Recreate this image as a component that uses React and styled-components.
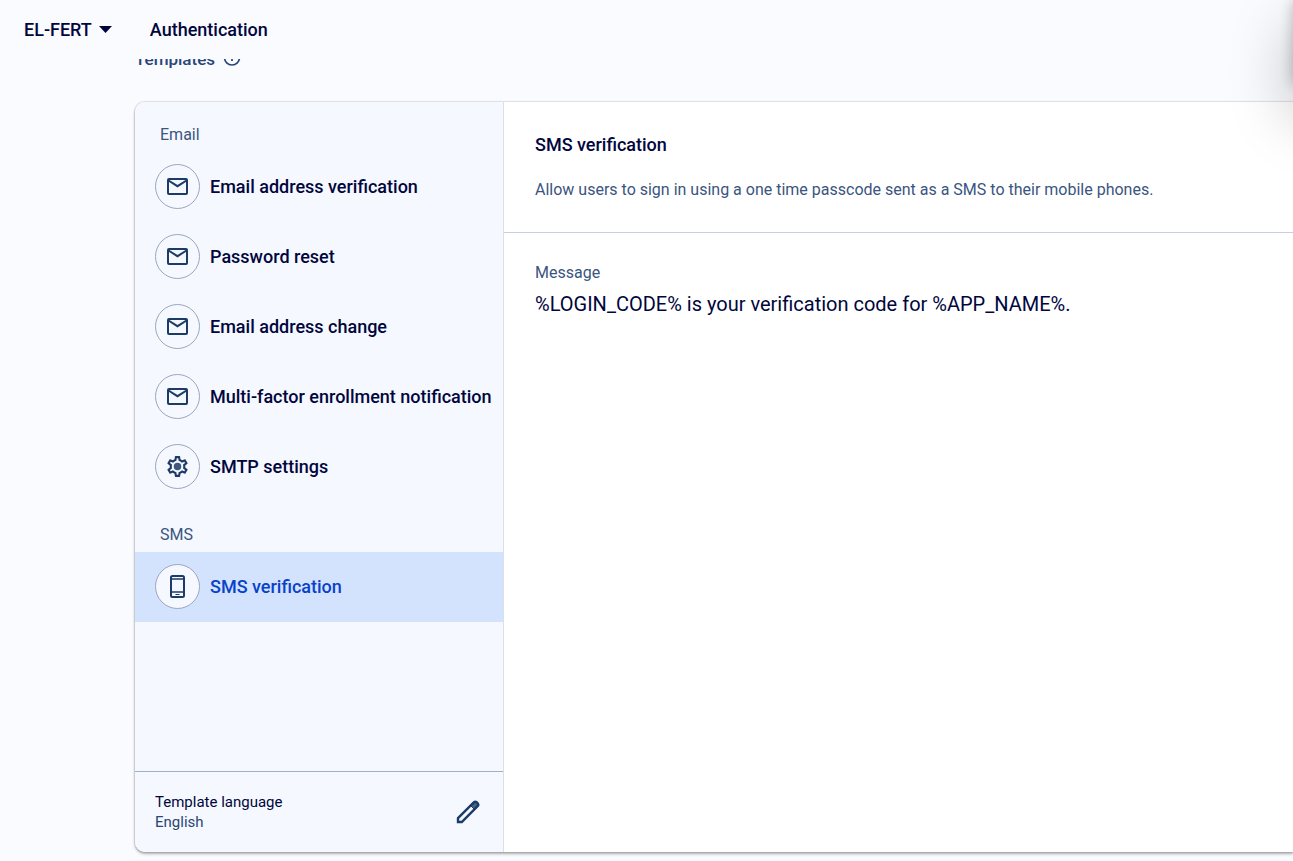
import React from "react";
import styled, { createGlobalStyle } from "styled-components";

const GlobalStyle = createGlobalStyle`
  *, *::before, *::after { box-sizing: border-box; }
  body {
    margin: 0;
    background: #fafbff;
    color: #00063d;
    font-family: Roboto, "Liberation Sans", sans-serif;
  }
  h1, h2, h3, p, ul, dl, dd { margin: 0; padding: 0; }
  button { font: inherit; color: inherit; background: none; border: 0; padding: 0; cursor: pointer; }
`;

const Page = styled.div`
  min-height: 100vh;
  display: flex;
  flex-direction: column;
  overflow: hidden;
`;

const Header = styled.header`
  height: 59px;
  flex: none;
  display: flex;
  align-items: center;
  gap: 38px;
  padding: 0 24px;
`;

const ProjectButton = styled.button`
  display: flex;
  align-items: center;
  gap: 7px;
  font-size: 18px;
  line-height: 24px;
  font-weight: 500;
`;

const HeaderTitle = styled.h1`
  font-size: 18px;
  line-height: 24px;
  font-weight: 500;
`;

const ScrollArea = styled.main`
  flex: 1;
  display: flex;
  flex-direction: column;
  overflow: hidden;
  padding: 0 0 9px 135px;
`;

const Tab = styled.nav`
  display: flex;
  align-items: center;
  gap: 8px;
  margin-top: -10px;
  margin-bottom: 33px;
  color: #294677;
`;

const TabLink = styled.a`
  color: inherit;
  text-decoration: none;
  font-size: 17px;
  line-height: 20px;
  font-weight: 500;
`;

const Card = styled.div`
  flex: 1;
  display: flex;
  background: #fff;
  border-radius: 10px 0 0 10px;
  box-shadow: 0 0 1px 1px rgba(60, 64, 80, 0.14), 0 2px 3px rgba(0, 0, 0, 0.3);
`;

const Sidebar = styled.aside`
  flex: 0 0 369px;
  min-width: 0;
  display: flex;
  flex-direction: column;
  background: #f5f8fe;
  border-right: 1px solid #d9dfeb;
  border-radius: 10px 0 0 10px;
`;

const GroupLabel = styled.h3`
  padding: 23px 25px 7px;
  font-size: 16px;
  line-height: 20px;
  font-weight: 400;
  color: #3a5580;
`;

const List = styled.ul`
  list-style: none;
`;

const Row = styled.button`
  width: 100%;
  height: 70px;
  display: flex;
  align-items: center;
  gap: 10px;
  padding: 0 8px 1px 20px;
  text-align: left;
  white-space: nowrap;
  font-size: 18px;
  line-height: 25px;
  font-weight: 500;
  color: ${(p) => (p.$active ? "#0842c8" : "#00063d")};
  background: ${(p) => (p.$active ? "#d3e3fd" : "transparent")};
`;

const IconCircle = styled.span`
  flex: none;
  width: 45px;
  height: 45px;
  display: grid;
  place-items: center;
  border: 1px solid #9aa7c0;
  border-radius: 50%;
  background: #f5f8fe;
  color: #1c3b66;
`;

const LanguageBar = styled.footer`
  margin-top: auto;
  height: 81px;
  display: flex;
  align-items: center;
  justify-content: space-between;
  padding: 0 23px 0 20px;
  border-top: 1px solid #9fb0c9;
`;

const LanguageText = styled.dl`
  font-size: 15px;
  line-height: 20px;
`;

const LanguageValue = styled.dd`
  color: #294677;
`;

const EditButton = styled.button`
  display: grid;
  color: #1c3b66;
`;

const Detail = styled.section`
  flex: 1;
  min-width: 0;
`;

const DetailHead = styled.div`
  padding: 31px 31px 32px;
  border-bottom: 1px solid #c9d0dd;
`;

const DetailTitle = styled.h2`
  font-size: 18px;
  line-height: 24px;
  font-weight: 500;
`;

const Description = styled.p`
  margin-top: 23px;
  font-size: 16px;
  line-height: 20px;
  color: #3a5580;
`;

const Message = styled.dl`
  padding: 30px 31px;
`;

const MessageLabel = styled.dt`
  font-size: 16px;
  line-height: 20px;
  color: #3a5580;
`;

const MessageText = styled.dd`
  margin-top: 7px;
  font-size: 20px;
  line-height: 28px;
`;

const FloatingPanel = styled.div`
  position: fixed;
  top: 0;
  left: 100%;
  width: 400px;
  height: 84px;
  box-shadow: 0 0 14px rgba(0, 0, 0, 0.24), 0 30px 60px 4px rgba(0, 0, 0, 0.22);
  pointer-events: none;
`;

const MailIcon = () => (
  <svg width="21" height="17" viewBox="0 0 21 17" fill="none" stroke="currentColor" strokeWidth="2" aria-hidden="true">
    <rect x="1" y="1" width="19" height="15" rx="1" />
    <path d="M1.5 2.5 10.5 8.2 19.5 2.5" />
  </svg>
);

const GearIcon = () => (
  <svg width="25" height="25" viewBox="0 0 24 24" fill="currentColor" aria-hidden="true">
    <path d="M19.43 12.98c.04-.32.07-.64.07-.98s-.03-.66-.07-.98l2.11-1.65c.19-.15.24-.42.12-.64l-2-3.46c-.09-.16-.26-.25-.44-.25-.06 0-.12.01-.17.03l-2.49 1c-.52-.4-1.08-.73-1.69-.98l-.38-2.65C14.46 2.18 14.25 2 14 2h-4c-.25 0-.46.18-.49.42l-.38 2.65c-.61.25-1.17.59-1.69.98l-2.49-1c-.06-.02-.12-.03-.18-.03-.17 0-.34.09-.43.25l-2 3.46c-.13.22-.07.49.12.64l2.11 1.65c-.04.32-.07.65-.07.98s.03.66.07.98l-2.11 1.65c-.19.15-.24.42-.12.64l2 3.46c.09.16.26.25.44.25.06 0 .12-.01.17-.03l2.49-1c.52.4 1.08.73 1.69.98l.38 2.65c.03.24.24.42.49.42h4c.25 0 .46-.18.49-.42l.38-2.65c.61-.25 1.17-.59 1.69-.98l2.49 1c.06.02.12.03.18.03.17 0 .34-.09.43-.25l2-3.46c.12-.22.07-.49-.12-.64l-2.11-1.65zm-1.98-1.71c.04.31.05.52.05.73 0 .21-.02.43-.05.73l-.14 1.13.89.7 1.08.84-.7 1.21-1.27-.51-1.04-.42-.9.68c-.43.32-.84.56-1.25.73l-1.06.43-.16 1.13-.2 1.35h-1.4l-.19-1.35-.16-1.13-1.06-.43c-.43-.18-.83-.41-1.23-.71l-.91-.7-1.06.43-1.27.51-.7-1.21 1.08-.84.89-.7-.14-1.13c-.03-.31-.05-.54-.05-.74s.02-.43.05-.73l.14-1.13-.89-.7-1.08-.84.7-1.21 1.27.51 1.04.42.9-.68c.43-.32.84-.56 1.25-.73l1.06-.43.16-1.13.2-1.35h1.39l.19 1.35.16 1.13 1.06.43c.43.18.83.41 1.23.71l.91.7 1.06-.43 1.27-.51.7 1.21-1.07.85-.89.7.14 1.13z" />
    <circle cx="12" cy="12" r="3.6" fillOpacity="0.85" />
  </svg>
);

const PhoneIcon = () => (
  <svg width="15" height="23" viewBox="0 0 15 23" fill="none" stroke="currentColor" aria-hidden="true">
    <rect x="1" y="1" width="13" height="21" rx="1.5" strokeWidth="2" />
    <path d="M1 4H14M1 17H14" strokeWidth="1.5" />
    <path d="M5.5 19.5H9.5" strokeWidth="1" />
  </svg>
);

const PencilIcon = () => (
  <svg width="24" height="24" viewBox="0 0 24 24" fill="none" stroke="currentColor" strokeWidth="2.4" aria-hidden="true">
    <path d="M2 18.2 17.8 2.4a2.2 2.2 0 0 1 3 0l.8.8a2.2 2.2 0 0 1 0 3L5.8 22H2z" />
    <path d="M14.6 5.6 17.8 2.4a2.2 2.2 0 0 1 3 0l.8.8a2.2 2.2 0 0 1 0 3L18.4 9.4z" fill="currentColor" fillOpacity="0.8" strokeWidth="1" />
  </svg>
);

const CaretIcon = () => (
  <svg width="13" height="7" viewBox="0 0 13 7" fill="currentColor" aria-hidden="true">
    <path d="M0 0H13L6.5 7z" />
  </svg>
);

const InfoIcon = () => (
  <svg width="18" height="18" viewBox="0 0 18 18" fill="none" stroke="currentColor" strokeWidth="1.7" aria-hidden="true">
    <circle cx="9" cy="7.5" r="7.5" />
    <path d="M9 3.5v2M9 7v4" />
  </svg>
);

const emailTemplates = [
  { label: "Email address verification", Icon: MailIcon },
  { label: "Password reset", Icon: MailIcon },
  { label: "Email address change", Icon: MailIcon },
  { label: "Multi-factor enrollment notification", Icon: MailIcon },
  { label: "SMTP settings", Icon: GearIcon },
];

const smsTemplates = [{ label: "SMS verification", Icon: PhoneIcon, active: true }];

const TemplateGroup = ({ title, items }) => (
  <section>
    <GroupLabel>{title}</GroupLabel>
    <List>
      {items.map(({ label, Icon, active }) => (
        <li key={label}>
          <Row type="button" $active={active} aria-current={active ? "true" : undefined}>
            <IconCircle>
              <Icon />
            </IconCircle>
            {label}
          </Row>
        </li>
      ))}
    </List>
  </section>
);

export default function App() {
  return (
    <Page>
      <GlobalStyle />
      <Header>
        <ProjectButton type="button">
          EL-FERT
          <CaretIcon />
        </ProjectButton>
        <HeaderTitle>Authentication</HeaderTitle>
      </Header>
      <ScrollArea>
        <Tab>
          <TabLink href="#templates">Templates</TabLink>
          <InfoIcon />
        </Tab>
        <Card>
          <Sidebar>
            <TemplateGroup title="Email" items={emailTemplates} />
            <TemplateGroup title="SMS" items={smsTemplates} />
            <LanguageBar>
              <LanguageText>
                <dt>Template language</dt>
                <LanguageValue>English</LanguageValue>
              </LanguageText>
              <EditButton type="button" aria-label="Edit template language">
                <PencilIcon />
              </EditButton>
            </LanguageBar>
          </Sidebar>
          <Detail>
            <DetailHead>
              <DetailTitle>SMS verification</DetailTitle>
              <Description>
                Allow users to sign in using a one time passcode sent as a SMS to their mobile phones.
              </Description>
            </DetailHead>
            <Message>
              <MessageLabel>Message</MessageLabel>
              <MessageText>%LOGIN_CODE% is your verification code for %APP_NAME%.</MessageText>
            </Message>
          </Detail>
        </Card>
      </ScrollArea>
      <FloatingPanel />
    </Page>
  );
}
